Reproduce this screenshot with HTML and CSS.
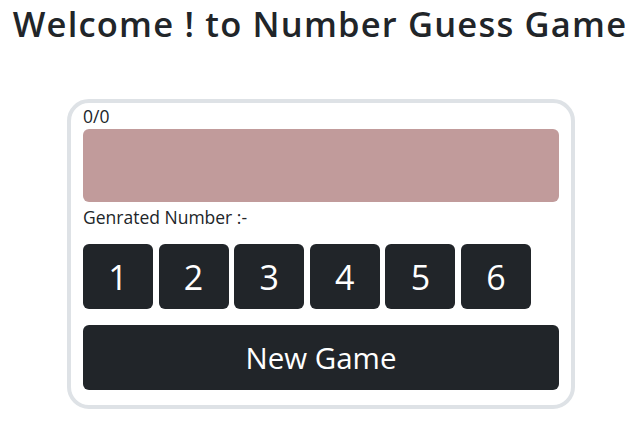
FILE: index.html
```html
<!DOCTYPE html>
<html>
<head>
<meta charset="utf-8">
<link rel="stylesheet" href="styles.css">
</head>
<body>
<h1 class="title">Welcome ! to Number Guess Game</h1>
<div class="card">
  <div class="score">0/0</div>
  <div class="result"></div>
  <div class="generated">Genrated Number :-</div>
  <div class="numbers">
    <button class="num">1</button>
    <button class="num">2</button>
    <button class="num">3</button>
    <button class="num">4</button>
    <button class="num">5</button>
    <button class="num">6</button>
  </div>
  <button class="new-game">New Game</button>
</div>
</body>
</html>
```
FILE: styles.css
```css
* { box-sizing: border-box; }
body {
  margin: 0;
  font-family: "Open Sans", "Noto Sans", sans-serif;
  color: #212529;
  background: #fff;
}
.title {
  margin: 4px 0 0;
  font-size: 34.5px;
  font-weight: 600;
  letter-spacing: 1.2px;
  line-height: 40px;
  text-align: center;
  white-space: nowrap;
  color: #212529;
}
.card {
  width: 508px;
  margin: 55px 0 0 calc(50% - 253px);
  border: 4px solid #dee2e6;
  border-radius: 22px;
  padding: 1px 12px 15px;
}
.score, .generated {
  font-size: 17.5px;
  line-height: 24px;
}
.result {
  height: 73px;
  margin-top: 1px;
  background: #c19b9b;
  border-radius: 6px;
}
.generated { margin-top: 3px; }
.numbers {
  display: flex;
  gap: 5.6px;
  margin-top: 15px;
}
.num, .new-game {
  font-family: inherit;
  border: none;
  background: #212529;
  color: #fff;
  border-radius: 6px;
  padding: 0;
}
.num {
  width: 70px;
  height: 65px;
  font-size: 34px;
}
.new-game {
  display: block;
  width: 100%;
  height: 65px;
  margin-top: 16px;
  font-size: 29.5px;
}
```
